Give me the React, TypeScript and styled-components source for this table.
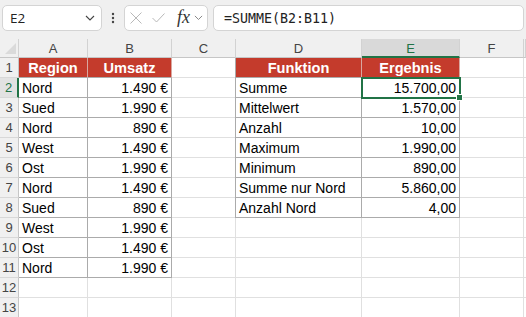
import styled, { createGlobalStyle, css } from "styled-components";

const GlobalStyle = createGlobalStyle`
    body {
        margin: 0;
        overflow: hidden;
        background: #ffffff;
        font-family: "Liberation Sans", Arial, sans-serif;
    }
`

const GREEN = "#217346";
const RED = "#c43b2c";

const Toolbar = styled.div`
    display: flex;
    align-items: flex-start;
    height: 39px;
    box-sizing: border-box;
    padding: 5px 2px 0 2px;
    background: #f0f0f0;
`

const Box = styled.div`
    height: 26px;
    box-sizing: border-box;
    background: #ffffff;
    border: 1px solid #d4d4d4;
    border-radius: 5px;
    display: flex;
    align-items: center;
`

const NameBox = styled(Box)`
    width: 100px;
    padding: 0 6px 0 7px;
    justify-content: space-between;
    font-family: "Open Sans", "Liberation Sans", sans-serif;
    font-size: 13.5px;
    color: #222;
`

const Dots = styled.div`
    width: 22px;
    height: 26px;
    display: flex;
    align-items: center;
    justify-content: center;
`

const FxBox = styled(Box)`
    width: 84px;
    padding: 0 0 0 5px;
`

const IconSlot = styled.span<{ $gap: number }>`
    display: flex;
    align-items: center;
    margin-left: ${p => p.$gap}px;
`

const Fx = styled.span`
    font-family: "Liberation Serif", "Times New Roman", serif;
    font-style: italic;
    font-size: 18px;
    color: #333;
    margin-left: 12px;
    line-height: 1;
    padding-bottom: 2px;
`

const FormulaBox = styled(Box)`
    flex: 1;
    margin-left: 5px;
    padding-left: 10px;
    font-family: "DejaVu Sans Mono", "Liberation Mono", monospace;
    font-size: 13.3px;
    color: #222;
`

const Sheet = styled.div`
    position: relative;
    display: grid;
    grid-template-columns: 19px 69px 84px 64px 126px 98px 64px 2px;
    grid-template-rows: 19px;
    grid-auto-rows: 20px;
    overflow: hidden;
`

const ColHead = styled.div<{ $active?: boolean }>`
    box-sizing: border-box;
    background: ${p => p.$active ? "#d9d9d9" : "#f0f0f0"};
    border-right: 1px solid #d2d2d2;
    border-bottom: ${p => p.$active ? `2px solid ${GREEN}` : "1px solid #c6c6c6"};
    color: ${p => p.$active ? GREEN : "#444"};
    font-size: 13px;
    display: flex;
    align-items: center;
    justify-content: center;
    padding-top: ${p => p.$active ? "1px" : "0"};
`

const Corner = styled.div`
    box-sizing: border-box;
    background: #f0f0f0;
    border-right: 1px solid #d2d2d2;
    border-bottom: 1px solid #c6c6c6;
    display: flex;
    align-items: flex-end;
    justify-content: flex-end;
    padding: 0 2px 3px 0;
`

const RowHead = styled.div<{ $active?: boolean }>`
    box-sizing: border-box;
    background: ${p => p.$active ? "#e2e2e2" : "#f0f0f0"};
    border-right: ${p => p.$active ? `2px solid ${GREEN}` : "1px solid #c6c6c6"};
    border-bottom: 1px solid #d8d8d8;
    color: ${p => p.$active ? GREEN : "#444"};
    font-size: 13px;
    line-height: 20px;
    text-align: center;
`

const Cell = styled.div<{ $table?: boolean; $head?: boolean; $right?: boolean; $edge?: boolean }>`
    box-sizing: border-box;
    border-right: 1px solid #e0e0e0;
    border-bottom: 1px solid #e0e0e0;
    font-size: 14px;
    line-height: 20px;
    color: #000;
    padding: 0 3px;
    white-space: nowrap;
    overflow: hidden;
    text-align: ${p => p.$right ? "right" : "left"};
    ${p => p.$table && css`
        border-right-color: #ababab;
        border-bottom-color: #ababab;
    `}
    ${p => p.$edge && css`
        box-shadow: -1px 0 0 #ababab;
    `}
    ${p => p.$head && css`
        background: ${RED};
        color: #ffffff;
        font-weight: 700;
        font-size: 14.6px;
        text-align: center;
        border-right-color: #d9a7a0;
        border-bottom-color: #ababab;
    `}
`

const Selection = styled.div`
    position: absolute;
    left: 361px;
    top: 38px;
    width: 100px;
    height: 22px;
    box-sizing: border-box;
    border: 2px solid ${GREEN};
    pointer-events: none;
`

const Handle = styled.div`
    position: absolute;
    left: 456px;
    top: 55px;
    width: 7px;
    height: 7px;
    box-sizing: border-box;
    background: ${GREEN};
    border: 1px solid #ffffff;
`

const left = [
    ["Nord", "1.490 €"],
    ["Sued", "1.990 €"],
    ["Nord", "890 €"],
    ["West", "1.490 €"],
    ["Ost", "1.990 €"],
    ["Nord", "1.490 €"],
    ["Sued", "890 €"],
    ["West", "1.990 €"],
    ["Ost", "1.490 €"],
    ["Nord", "1.990 €"],
];

const right = [
    ["Summe", "15.700,00"],
    ["Mittelwert", "1.570,00"],
    ["Anzahl", "10,00"],
    ["Maximum", "1.990,00"],
    ["Minimum", "890,00"],
    ["Summe nur Nord", "5.860,00"],
    ["Anzahl Nord", "4,00"],
];

const columns = ["A", "B", "C", "D", "E", "F", ""];

const Chevron = ({ color, size }: { color: string; size: number }) => (
    <svg width={size} height={size * 0.6} viewBox="0 0 10 6">
        <path d="M1 1 L5 5 L9 1" fill="none" stroke={color} strokeWidth="1.1" />
    </svg>
);

const App = () => {
    const rows = [];
    for (let r = 1; r <= 13; r++) {
        const a = left[r - 2];
        const d = right[r - 2];
        const isHead = r === 1;
        const inLeft = r <= 11;
        const inRight = r <= 8;
        rows.push(
            <RowHead key={`h${r}`} $active={r === 2}>{r}</RowHead>,
            <Cell key={`a${r}`} $head={isHead} $table={inLeft}>{isHead ? "Region" : a?.[0]}</Cell>,
            <Cell key={`b${r}`} $head={isHead} $table={inLeft} $right>{isHead ? "Umsatz" : a?.[1]}</Cell>,
            <Cell key={`c${r}`} />,
            <Cell key={`d${r}`} $head={isHead} $table={inRight} $edge={inRight}>{isHead ? "Funktion" : d?.[0]}</Cell>,
            <Cell key={`e${r}`} $head={isHead} $table={inRight} $right>{isHead ? "Ergebnis" : d?.[1]}</Cell>,
            <Cell key={`f${r}`} />,
            <Cell key={`g${r}`} />
        );
    }

    return (
        <>
            <GlobalStyle />
            <Toolbar>
                <NameBox>
                    <span>E2</span>
                    <Chevron color="#444" size={10} />
                </NameBox>
                <Dots>
                    <svg width="4" height="12" viewBox="0 0 4 12">
                        <circle cx="2" cy="2" r="1.2" fill="#444" />
                        <circle cx="2" cy="6" r="1.2" fill="#444" />
                        <circle cx="2" cy="10" r="1.2" fill="#444" />
                    </svg>
                </Dots>
                <FxBox>
                    <IconSlot $gap={0}>
                        <svg width="12" height="12" viewBox="0 0 12 12">
                            <path d="M0.5 0.5 L11.5 11.5 M11.5 0.5 L0.5 11.5" stroke="#b8b8b8" strokeWidth="1" />
                        </svg>
                    </IconSlot>
                    <IconSlot $gap={10}>
                        <svg width="13" height="10" viewBox="0 0 13 10">
                            <path d="M0.5 5 L4.5 9 L12.5 0.5" fill="none" stroke="#b8b8b8" strokeWidth="1" />
                        </svg>
                    </IconSlot>
                    <Fx>fx</Fx>
                    <IconSlot $gap={4}>
                        <Chevron color="#888" size={9} />
                    </IconSlot>
                </FxBox>
                <FormulaBox>=SUMME(B2:B11)</FormulaBox>
            </Toolbar>
            <Sheet>
                <Corner>
                    <svg width="11" height="11" viewBox="0 0 11 11">
                        <path d="M11 0 L11 11 L0 11 Z" fill="#dadada" />
                    </svg>
                </Corner>
                {columns.map(c => (
                    <ColHead key={c || "g"} $active={c === "E"}>{c}</ColHead>
                ))}
                {rows}
                <Selection />
                <Handle />
            </Sheet>
        </>
    );
}

export default App;
